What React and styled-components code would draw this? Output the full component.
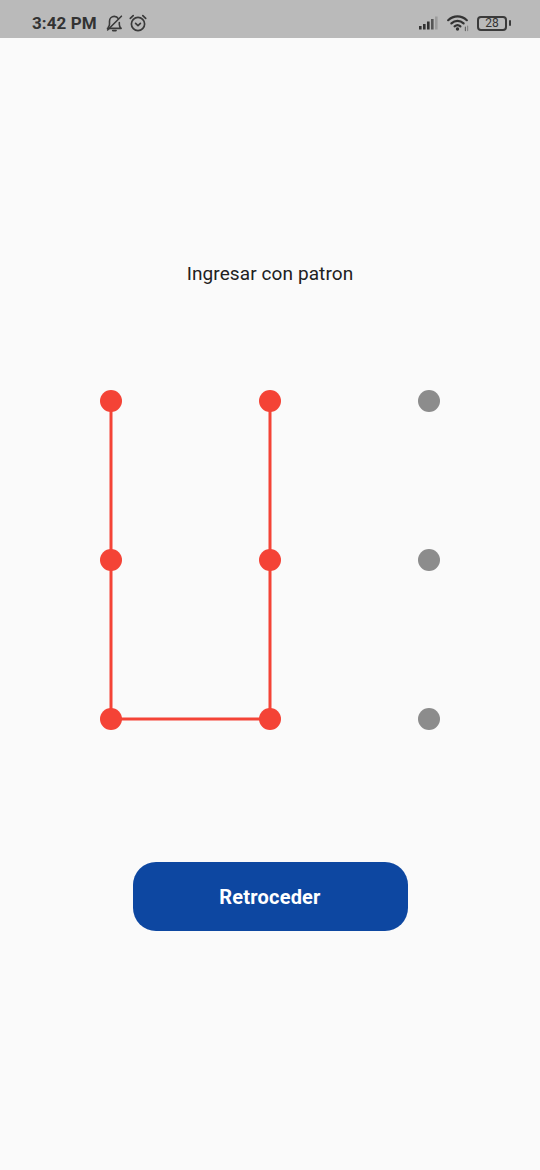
import React from "react";
import styled, { createGlobalStyle } from "styled-components";

const Global = createGlobalStyle`
  html, body { margin: 0; padding: 0; background: #fafafa; }
  * { box-sizing: border-box; }
`;

const Screen = styled.div`
  width: 540px;
  height: 1170px;
  background: #fafafa;
  display: flex;
  flex-direction: column;
  align-items: center;
  overflow: hidden;
  font-family: Roboto, "Liberation Sans", sans-serif;
`;

const StatusBar = styled.div`
  width: 100%;
  height: 38px;
  flex: none;
  background: #bababa;
  color: #333;
  display: flex;
  align-items: center;
  justify-content: space-between;
  padding: 8px 29px 0 32px;
`;

const StatusGroup = styled.div`
  display: flex;
  align-items: center;
  gap: ${(p) => p.$gap || 0}px;
`;

const Clock = styled.span`
  font-family: Roboto, "Liberation Sans", sans-serif;
  font-size: 17px;
  font-weight: 700;
  color: #333;
  margin-right: 3px;
  letter-spacing: 0.1px;
`;

const Title = styled.h1`
  margin: 225px 0 0;
  height: 22px;
  font-size: 19px;
  line-height: 22px;
  font-weight: 400;
  color: #212121;
  letter-spacing: 0.1px;
`;

const Pattern = styled.svg`
  display: block;
  flex: none;
  margin-top: 95px;
`;

const BackButton = styled.button`
  margin-top: 122px;
  width: 275px;
  height: 69px;
  border: none;
  border-radius: 23px;
  background: #0d47a1;
  color: #fff;
  font-family: Roboto, "Liberation Sans", sans-serif;
  font-size: 20px;
  font-weight: 700;
  letter-spacing: 0.2px;
  padding: 0;
`;

const BatteryBox = styled.div`
  width: 30px;
  height: 15px;
  border: 2px solid #3a3a3a;
  border-radius: 4px;
  font-size: 12px;
  line-height: 11px;
  text-align: center;
  color: #333;
  font-weight: 400;
`;

const BatteryCap = styled.div`
  width: 2px;
  height: 6px;
  margin-left: 2px;
  background: #3a3a3a;
  border-radius: 1px;
`;

const BellOff = () => (
  <svg width="17" height="17" viewBox="0 0 17 17" fill="none" stroke="#3a3a3a" strokeWidth="1.6" strokeLinecap="round" strokeLinejoin="round">
    <path d="M1.5 13.4h13.6c-1.3-1.2-1.8-2.2-1.8-4.2V7.6" />
    <path d="M12.3 3.6C11.5 2.2 10 1.4 8.3 1.4c-2.7 0-4.8 2.2-4.8 4.9v2.9c0 1.2-.5 2.2-1.2 3" />
    <path d="M6.7 15.6h3.4" />
    <path d="M15.4 1.2 1.6 15" />
  </svg>
);

const Alarm = () => (
  <svg width="18" height="18" viewBox="0 0 18 18" fill="none" stroke="#3a3a3a" strokeWidth="1.7" strokeLinecap="round" strokeLinejoin="round">
    <circle cx="9" cy="10" r="6.6" />
    <path d="M1.3 4.4 4.2 1.6" />
    <path d="M16.7 4.4 13.8 1.6" />
    <path d="M6.6 9.4 9 11.6l2.4-2.2" />
  </svg>
);

const Signal = () => (
  <svg width="20" height="14" viewBox="0 0 20 14">
    <rect x="0" y="10" width="2.6" height="3.5" fill="#333" />
    <rect x="4" y="8" width="2.6" height="5.5" fill="#333" />
    <rect x="8" y="5.5" width="2.6" height="8" fill="#333" />
    <rect x="12" y="3" width="2.6" height="10.5" fill="#555" />
    <rect x="16" y="0.5" width="2.6" height="13" fill="#9c9c9c" />
  </svg>
);

const Wifi = () => (
  <svg width="22" height="18" viewBox="0 0 22 18" fill="none" stroke="#333" strokeWidth="2.2" strokeLinecap="round">
    <path d="M1.2 6.2C6.6 1 14.4 1 19.8 6.2" />
    <path d="M4.4 9.4c3.6-3.3 8.6-3.3 12.2 0" />
    <path d="M7.6 12.4c1.9-1.6 4-1.6 5.8 0" />
    <circle cx="10.5" cy="15" r="1.7" fill="#333" stroke="none" />
    <path d="M18.4 13v3.6" strokeWidth="1.2" stroke="#666" />
    <path d="M20.6 12v4.6" strokeWidth="1.2" stroke="#888" />
  </svg>
);

const X = [21, 180, 339];
const Y = [21, 180, 339];
const active = [
  [0, 0], [1, 0], [0, 1], [1, 1], [0, 2], [1, 2],
];
const isActive = (c, r) => active.some(([a, b]) => a === c && b === r);

const PatternDrawing = () => (
  <Pattern width="360" height="360" viewBox="0 0 360 360">
    <path d={`M${X[0]} ${Y[0]}V${Y[2]}H${X[1]}V${Y[0]}`} fill="none" stroke="#f44336" strokeWidth="3" />
    {Y.map((cy, r) =>
      X.map((cx, c) => (
        <circle key={`${c}-${r}`} cx={cx} cy={cy} r="11" fill={isActive(c, r) ? "#f44336" : "#8c8c8c"} />
      ))
    )}
  </Pattern>
);

export default function App() {
  return (
    <>
      <Global />
      <Screen>
        <StatusBar>
          <StatusGroup $gap={6}>
            <Clock>3:42 PM</Clock>
            <BellOff />
            <Alarm />
          </StatusGroup>
          <StatusGroup $gap={8}>
            <Signal />
            <Wifi />
            <StatusGroup>
              <BatteryBox>28</BatteryBox>
              <BatteryCap />
            </StatusGroup>
          </StatusGroup>
        </StatusBar>
        <Title>Ingresar con patron</Title>
        <PatternDrawing />
        <BackButton>Retroceder</BackButton>
      </Screen>
    </>
  );
}
